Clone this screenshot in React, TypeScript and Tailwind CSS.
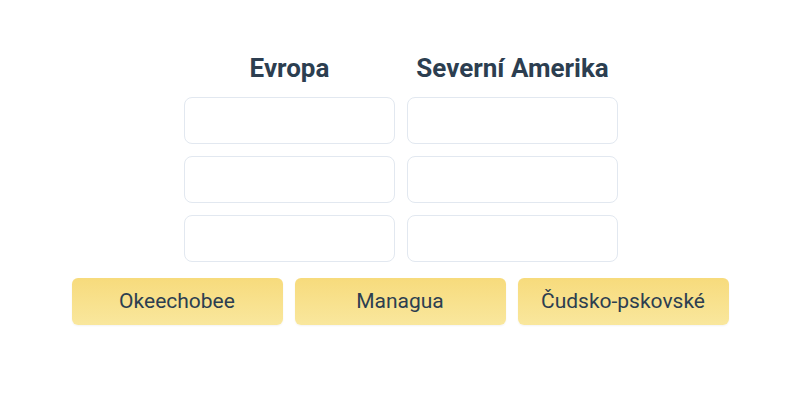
const columns = [
  { title: "Evropa", slots: 3 },
  { title: "Severní Amerika", slots: 3 },
];

const options = ["Okeechobee", "Managua", "Čudsko-pskovské"];

export default function App() {
  return (
    <div
      className="flex h-[400px] w-[800px] flex-col items-center bg-white pt-[52px] text-[#2c3e50]"
      style={{ fontFamily: "Roboto, 'Noto Sans', sans-serif" }}
    >
      <div className="flex gap-3 pl-[2px]">
        {columns.map((col) => (
          <div key={col.title} className="flex w-[211px] flex-col items-center">
            <h2 className="mb-[12px] h-[33px] whitespace-nowrap text-[26px] font-bold leading-[33px]">{col.title}</h2>
            <div className="flex w-full flex-col gap-3">
              {Array.from({ length: col.slots }).map((_, i) => (
                <div key={i} className="h-[47px] w-full rounded-lg border border-[#e2e8f0] bg-white" />
              ))}
            </div>
          </div>
        ))}
      </div>
      <div className="mt-[16px] flex gap-3">
        {options.map((o) => (
          <button
            key={o}
            className="h-[47px] w-[211px] rounded-md bg-gradient-to-b from-[#f7db7c] to-[#f9e79d] text-[21px] text-[#2c3e50] shadow-[0_1px_2px_rgba(0,0,0,0.05)]"
          >
            {o}
          </button>
        ))}
      </div>
    </div>
  );
}
